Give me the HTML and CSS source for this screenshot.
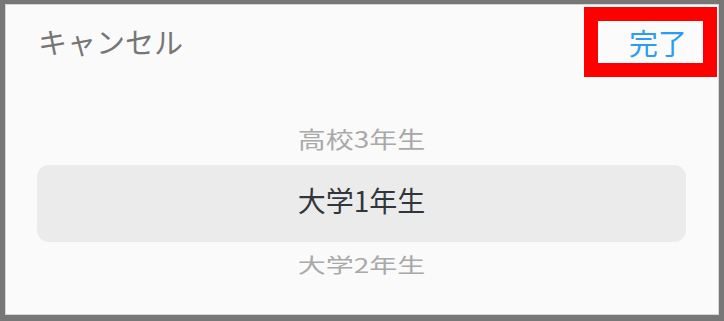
FILE: index.html
```html
<!DOCTYPE html>
<html lang="ja">
<head>
<meta charset="utf-8">
<title>Picker</title>
<link rel="stylesheet" href="styles.css">
</head>
<body>
<div class="frame">
  <div class="header">
    <span class="cancel">キャンセル</span>
    <span class="done">完了</span>
  </div>
  <div class="picker">
    <div class="item side top"><span>高校3年生</span></div>
    <div class="item selected"><span>大学1年生</span></div>
    <div class="item side bottom"><span>大学2年生</span></div>
  </div>
</div>
</body>
</html>
```

FILE: styles.css
```css
html, body {
  margin: 0;
  padding: 0;
  background: #ffffff;
}
body {
  font-family: "Noto Sans CJK JP", "Noto Sans", sans-serif;
}
.frame {
  box-sizing: border-box;
  width: 724px;
  height: 321px;
  border-style: solid;
  border-color: #777777;
  border-width: 4px 5px 6px 5px;
  background: #fafafa;
  box-shadow: inset 0 1px 0 #d6d6d6, inset 1px 0 0 #d6d6d6, inset -1px 0 0 #d6d6d6, inset 0 -1px 0 #d6d6d6;
  display: flex;
  flex-direction: column;
}
.header {
  display: flex;
  justify-content: space-between;
  align-items: flex-start;
}
.cancel {
  margin: 23px 0 0 33px;
  font-size: 29px;
  line-height: 29px;
  color: #767676;
}
.done {
  margin: 3px 2px 0 0;
  border: 14px solid #ff0000;
  padding: 7px 16px 6px 31px;
  font-size: 29px;
  line-height: 29px;
  color: #2a9cf2;
  background: #fbfbfb;
}
.picker {
  margin: 39px 33px 0 32px;
  display: flex;
  flex-direction: column;
}
.item {
  box-sizing: border-box;
  height: 49px;
  padding-bottom: 6px;
  display: flex;
  align-items: center;
  justify-content: center;
  font-size: 28px;
  line-height: 28px;
}
.item span {
  display: block;
}
.side {
  color: #a9a9a9;
}
.top span {
  transform: scaleY(0.8);
}
.bottom span {
  transform: scaleY(0.72);
}
.selected {
  height: 77px;
  padding-bottom: 8px;
  background: #ebebeb;
  border-radius: 12px;
  color: #30363c;
}
```
